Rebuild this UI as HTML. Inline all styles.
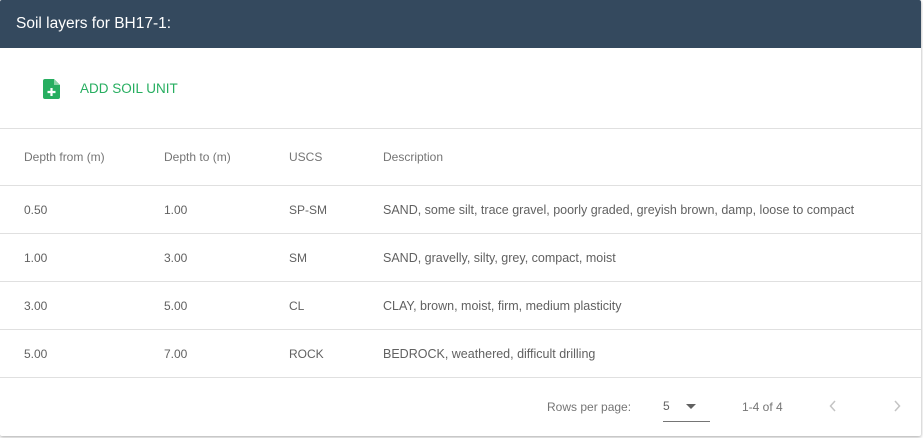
<!DOCTYPE html>
<html><head><style>
body{margin:0;background:#fff;font-family:"Liberation Sans",Roboto,sans-serif;}
.card{position:absolute;left:0;top:0;width:921px;height:436px;background:#fff;box-shadow:0 1px 3px rgba(0,0,0,.35);border-radius:2px;overflow:hidden}
.hdr{height:48px;background:#34495e;color:#fff;font-size:15.5px;line-height:48px;padding-left:16px;}
.add{position:absolute;top:79px;left:43px;color:#27ae60;font-size:13.5px;}
.add span{position:absolute;left:37px;top:2px;white-space:nowrap}
table{position:absolute;top:128px;left:0;width:921px;border-collapse:collapse;font-size:12px;color:#616161}
td,th{text-align:left;padding:0;padding-left:24px;border-top:1px solid #e0e0e0;font-weight:normal}
th{height:56px;color:#757575;}
td{height:47px;}
td:nth-child(4){font-size:12.5px}
.ft{position:absolute;top:377px;left:0;width:921px;height:59px;border-top:1px solid #e0e0e0;font-size:12px;color:#757575}
</style></head><body>
<div class="card">
<div class="hdr">Soil layers for BH17-1:</div>
<div class="add"><svg width="18" height="20" viewBox="0 0 18 20" style="position:absolute;left:0;top:0"><path d="M2 0H11L17 6V18Q17 20 15 20H2Q0 20 0 18V2Q0 0 2 0Z" fill="#27ae60"/><path d="M11 0V6H17Z" fill="#8fd4a9"/><path d="M8.5 9v8M4.5 13h8" stroke="#fff" stroke-width="2.2"/></svg><span>ADD SOIL UNIT</span></div>
<table>
<tr><th style="width:116px">Depth from (m)</th><th style="width:101px">Depth to (m)</th><th style="width:70px">USCS</th><th>Description</th></tr>
<tr><td>0.50</td><td>1.00</td><td>SP-SM</td><td>SAND, some silt, trace gravel, poorly graded, greyish brown, damp, loose to compact</td></tr>
<tr><td>1.00</td><td>3.00</td><td>SM</td><td>SAND, gravelly, silty, grey, compact, moist</td></tr>
<tr><td>3.00</td><td>5.00</td><td>CL</td><td>CLAY, brown, moist, firm, medium plasticity</td></tr>
<tr><td>5.00</td><td>7.00</td><td>ROCK</td><td>BEDROCK, weathered, difficult drilling</td></tr>
</table>
<div class="ft">
<span style="position:absolute;left:547px;top:22px">Rows per page:</span>
<span style="position:absolute;left:663px;top:21px;color:#616161">5</span>
<svg style="position:absolute;left:686px;top:26px" width="10" height="5"><path d="M0 0H10L5 5Z" fill="#616161"/></svg>
<div style="position:absolute;left:663px;top:43px;width:47px;height:1px;background:#757575"></div>
<span style="position:absolute;left:742px;top:22px">1-4 of 4</span>
<svg style="position:absolute;left:829px;top:22px" width="8" height="12"><path d="M6 1L1.5 6L6 11" stroke="#c4c4c4" stroke-width="1.5" fill="none"/></svg>
<svg style="position:absolute;left:893px;top:22px" width="8" height="12"><path d="M2 1L6.5 6L2 11" stroke="#c4c4c4" stroke-width="1.5" fill="none"/></svg>
</div>
</div>
</body></html>
